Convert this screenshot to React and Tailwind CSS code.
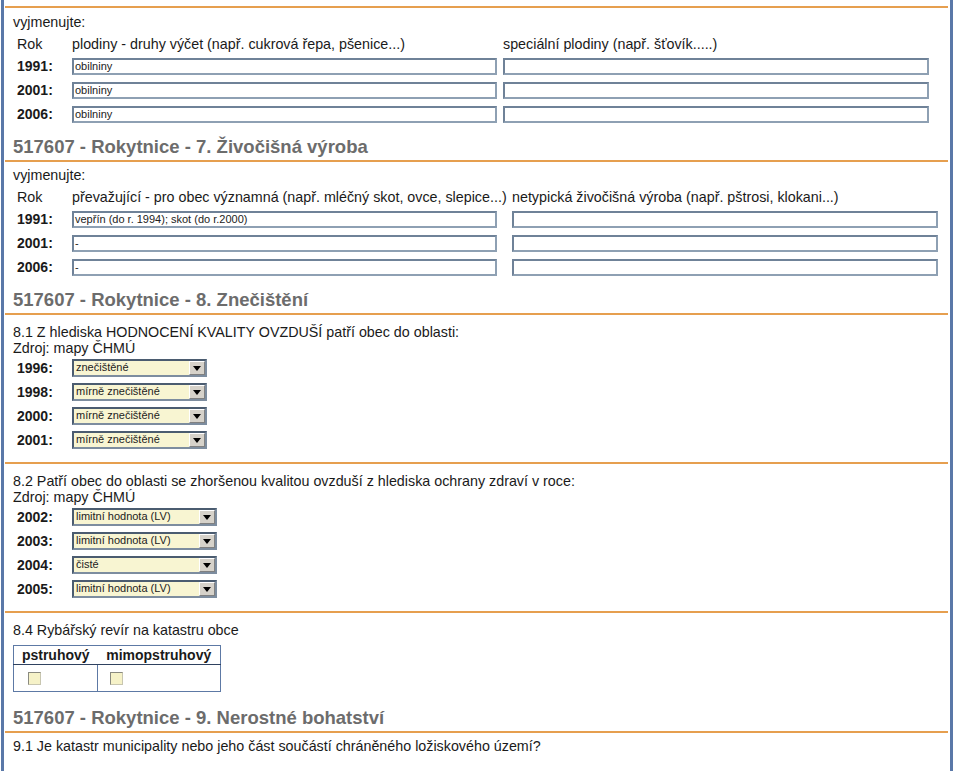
import React from "react";

const Orange = ({ cls = "" }) => (
  <div className={"ml-[1px] mr-[2px] h-[2px] bg-[#e69f4f] " + cls} />
);

const Heading = ({ children, cls = "" }) => (
  <div className={cls}>
    <div className="pl-[9px] h-[22px] leading-[22px] text-[18.5px] font-bold text-[#6c6c6c] whitespace-nowrap">
      {children}
    </div>
    <Orange cls="mt-[2px]" />
  </div>
);

const Field = ({ value = "", wide }) => (
  <div
    className={
      "h-[17px] border-2 border-t-[#6f8298] border-l-[#6f8298] border-b-[#8ea0b3] border-r-[#8ea0b3] bg-white text-[11px] leading-[13px] pl-[1px] text-[#222] overflow-hidden whitespace-nowrap " +
      (wide ? "w-[426px]" : "w-[425px]")
    }
  >
    {value}
  </div>
);

const Year = ({ children }) => (
  <div className="w-[55px] shrink-0 text-[14px] font-bold text-[#1a1a1a]">{children}</div>
);

const Select = ({ value, wide }) => (
  <div
    className={
      "flex h-[18px] border-2 border-t-[#4b5c70] border-l-[#4b5c70] border-b-[#7d8d9f] border-r-[#7d8d9f] bg-[#f8f5d2] " +
      (wide ? "w-[145px]" : "w-[135px]")
    }
  >
    <span className="flex-1 pl-[2px] text-[11px] leading-[12px] text-[#222] whitespace-nowrap overflow-hidden">
      {value}
    </span>
    <span className="w-[16px] h-full bg-[#d6d2ca] border-l border-t border-l-white border-t-white border-r border-b border-r-[#808080] border-b-[#808080] flex items-center justify-center">
      <svg width="8" height="5" viewBox="0 0 8 5" className="mt-[1px]">
        <polygon points="0,0 8,0 4,5" fill="#000" />
      </svg>
    </span>
  </div>
);

const Check = () => (
  <div className="w-[13px] h-[13px] border border-t-[#8a8a80] border-l-[#8a8a80] border-b-[#c8c6b0] border-r-[#c8c6b0] bg-[#f6f2c8]" />
);

export default function App() {
  return (
    <div className="bg-white min-h-[771px] font-['Liberation_Sans',Arial,sans-serif] text-[#1a1a1a]">
      <div className="ml-[1px] w-[952px] min-h-[771px] border-l-[3px] border-r-[3px] border-[#5a78a8] overflow-hidden">
        {/* Section 6 tail */}
        <Orange cls="mt-[6px]" />
        <div className="mt-[6px] pl-[9px] h-[16px] leading-[16px] text-[14.3px]">vyjmenujte:</div>
        <div className="mt-[6px] pl-[13px] h-[16px] leading-[16px] text-[14.3px] flex">
          <div className="w-[55px] shrink-0">Rok</div>
          <div className="w-[431px] shrink-0 whitespace-nowrap">plodiny - druhy výčet (např. cukrová řepa, pšenice...)</div>
          <div className="whitespace-nowrap">speciální plodiny (např. šťovík.....)</div>
        </div>
        <div className="mt-[2px] pl-[13px]">
          {["1991:", "2001:", "2006:"].map((y) => (
            <div key={y} className="h-[24px] flex items-center">
              <Year>{y}</Year>
              <div className="w-[431px] shrink-0">
                <Field value="obilniny" />
              </div>
              <Field wide />
            </div>
          ))}
        </div>

        {/* Section 7 */}
        <Heading cls="mt-[10px]">517607 - Rokytnice - 7. Živočišná výroba</Heading>
        <div className="mt-[5px] pl-[9px] h-[16px] leading-[16px] text-[14.3px]">vyjmenujte:</div>
        <div className="mt-[6px] pl-[13px] h-[16px] leading-[16px] text-[14.3px] flex">
          <div className="w-[55px] shrink-0">Rok</div>
          <div className="w-[440px] shrink-0 whitespace-nowrap">převažující - pro obec významná (např. mléčný skot, ovce, slepice...)</div>
          <div className="whitespace-nowrap">netypická živočišná výroba (např. pštrosi, klokani...)</div>
        </div>
        <div className="mt-[2px] pl-[13px]">
          {[
            ["1991:", "vepřín (do r. 1994); skot (do r.2000)"],
            ["2001:", "-"],
            ["2006:", "-"],
          ].map(([y, v]) => (
            <div key={y} className="h-[24px] flex items-center">
              <Year>{y}</Year>
              <div className="w-[440px] shrink-0">
                <Field value={v} />
              </div>
              <Field wide />
            </div>
          ))}
        </div>

        {/* Section 8 */}
        <Heading cls="mt-[10px]">517607 - Rokytnice - 8. Znečištění</Heading>
        <div className="mt-[9px] pl-[9px] text-[14.3px] leading-[16px]">
          <div>8.1 Z hlediska HODNOCENÍ KVALITY OVZDUŠÍ patří obec do oblasti:</div>
          <div>Zdroj: mapy ČHMÚ</div>
        </div>
        <div className="pl-[13px]">
          {[
            ["1996:", "znečištěné"],
            ["1998:", "mírně znečištěné"],
            ["2000:", "mírně znečištěné"],
            ["2001:", "mírně znečištěné"],
          ].map(([y, v]) => (
            <div key={y} className="h-[24px] flex items-center">
              <Year>{y}</Year>
              <Select value={v} />
            </div>
          ))}
        </div>
        <Orange cls="mt-[10px]" />
        <div className="mt-[9px] pl-[9px] text-[14.3px] leading-[16px]">
          <div>8.2 Patří obec do oblasti se zhoršenou kvalitou ovzduší z hlediska ochrany zdraví v roce:</div>
          <div>Zdroj: mapy ČHMÚ</div>
        </div>
        <div className="pl-[13px]">
          {[
            ["2002:", "limitní hodnota (LV)"],
            ["2003:", "limitní hodnota (LV)"],
            ["2004:", "čisté"],
            ["2005:", "limitní hodnota (LV)"],
          ].map(([y, v]) => (
            <div key={y} className="h-[24px] flex items-center">
              <Year>{y}</Year>
              <Select value={v} wide />
            </div>
          ))}
        </div>
        <Orange cls="mt-[10px]" />
        <div className="mt-[9px] pl-[9px] h-[16px] leading-[16px] text-[14.3px]">8.4 Rybářský revír na katastru obce</div>
        <div className="mt-[7px] pl-[9px]">
          <table className="border-collapse border border-[#5d79a5]">
            <thead>
              <tr className="h-[19px]">
                <th className="w-[84px] p-0 text-[14px] leading-[17px] font-bold text-center border-b border-[#2f4260]">pstruhový</th>
                <th className="w-[123px] p-0 text-[14px] leading-[17px] font-bold text-center border-b border-[#2f4260]">mimopstruhový</th>
              </tr>
            </thead>
            <tbody>
              <tr className="h-[27px]">
                <td className="p-0 pl-[14px] align-middle">
                  <div className="mt-[1px]"><Check /></div>
                </td>
                <td className="p-0 pl-[12px] align-middle border-l border-[#5d79a5]">
                  <div className="mt-[1px]"><Check /></div>
                </td>
              </tr>
            </tbody>
          </table>
        </div>

        {/* Section 9 */}
        <Heading cls="mt-[15px]">517607 - Rokytnice - 9. Nerostné bohatství</Heading>
        <div className="mt-[5px] pl-[9px] h-[16px] leading-[16px] text-[14.3px] whitespace-nowrap">
          9.1 Je katastr municipality nebo jeho část součástí chráněného ložiskového území?
        </div>
      </div>
    </div>
  );
}
